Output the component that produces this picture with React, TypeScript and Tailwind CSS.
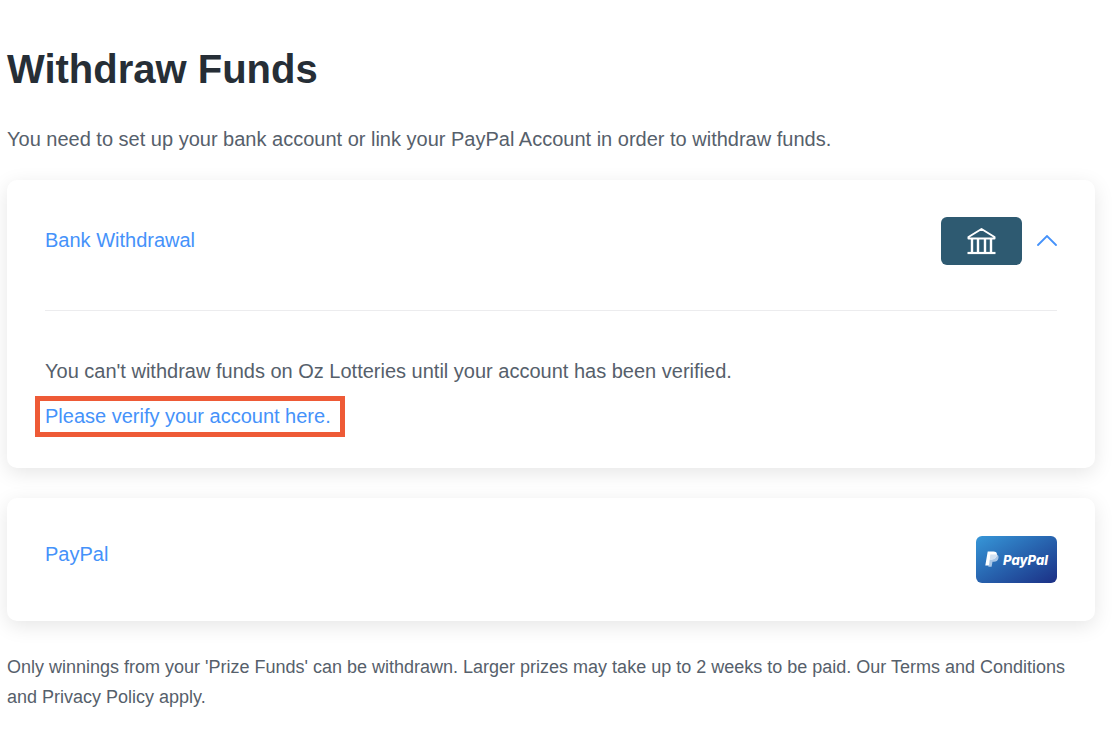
import { useState } from "react";

const cardClass =
  "rounded-[10px] bg-white px-[38px] shadow-[0_5px_20px_rgba(0,0,0,0.1)]";

function BankIcon() {
  return (
    <svg
      className="h-[28px] w-[30px]"
      viewBox="0 0 30 28"
      fill="none"
      stroke="#fff"
      strokeWidth="2"
      aria-hidden="true"
    >
      <path d="M1.5 10 14.5 2l13 8v1.5h-26z" strokeLinejoin="round" />
      <path d="M.5 26h28" strokeWidth="2.2" />
      <path d="M5 11v15M11 11v15M18 11v15M24 11v15" strokeWidth="2.4" />
    </svg>
  );
}

function ChevronIcon({ open }: { open: boolean }) {
  return (
    <svg
      className={`h-[12px] w-[20px] ${open ? "" : "rotate-180"}`}
      viewBox="0 0 20 12"
      fill="none"
      stroke="#4592fa"
      strokeWidth="1.8"
      strokeLinecap="round"
      aria-hidden="true"
    >
      <path d="M1 10 10 1l9 9" />
    </svg>
  );
}

function PayPalMark() {
  return (
    <svg className="h-[17px] w-[14px]" viewBox="0 0 14 17" aria-hidden="true">
      <path
        d="M5.3 3.4h5.6c2.2 0 3 1.6 2.6 3.6-.5 2.7-2.3 3.8-4.7 3.8H7.5l-.9 4.9H3.3z"
        fill="#a9c6e6"
      />
      <path
        d="M2.7.5h5.6c2.5 0 4 1.1 3.6 3.6-.5 3-2.5 4.3-5.1 4.3H4.9l-1 6H.3z"
        fill="#fff"
      />
      <path
        d="M5.3 3.4h6.6c-.4 3.3-2.4 5-5.1 5H4.9l-.3 2z"
        fill="#d3e2f2"
      />
    </svg>
  );
}

export default function App() {
  const [open, setOpen] = useState(true);

  return (
    <main className="pr-[21px] pb-4 pl-[7px] font-['Liberation_Sans',Arial,sans-serif] text-[20px] leading-[30px] text-[#56606b]">
      <h1 className="pt-[45px] text-[40px] leading-[48px] font-bold text-[#262e36]">
        Withdraw Funds
      </h1>
      <p className="mt-[31px]">
        You need to set up your bank account or link your PayPal Account in
        order to withdraw funds.
      </p>

      <section className={`mt-[26px] pt-[37px] pb-[31px] ${cardClass}`}>
        <button
          type="button"
          className="flex w-full items-center text-left text-[#4592fa]"
          aria-expanded={open}
          aria-controls="bank-panel"
          onClick={() => setOpen(!open)}
        >
          <span className="flex-1 pb-[2px]">Bank Withdrawal</span>
          <span className="mr-[15px] flex h-[48px] w-[81px] items-center justify-center rounded-[6px] bg-[#2e5a71]">
            <BankIcon />
          </span>
          <ChevronIcon open={open} />
        </button>
        {open && (
          <div
            id="bank-panel"
            className="mt-[45px] border-t border-[#ececee] pt-[45px]"
          >
            <p>
              You can't withdraw funds on Oz Lotteries until your account has
              been verified.
            </p>
            <a
              href="#verify"
              className="mt-[10px] -ml-[10px] block w-fit border-5 border-[#ee5a36] pr-[9px] pl-[5px] leading-[31px] text-[#4592fa]"
            >
              Please verify your account here.
            </a>
          </div>
        )}
      </section>

      <section className={`mt-[30px] py-[38px] ${cardClass}`}>
        <button
          type="button"
          className="flex w-full items-start justify-between text-left text-[#4592fa]"
        >
          <span className="leading-9">PayPal</span>
          <span className="flex h-[47px] w-[81px] items-center justify-center gap-1 rounded-[6px] bg-linear-to-br from-[#3797d8] to-[#1c2f85] font-[Inter,sans-serif] text-[13px] leading-4 font-extrabold text-white italic">
            <PayPalMark />
            PayPal
          </span>
        </button>
      </section>

      <p className="mt-[31px] text-[18px]">
        Only winnings from your 'Prize Funds' can be withdrawn. Larger prizes
        may take up to 2 weeks to be paid. Our Terms and Conditions and Privacy
        Policy apply.
      </p>
    </main>
  );
}
